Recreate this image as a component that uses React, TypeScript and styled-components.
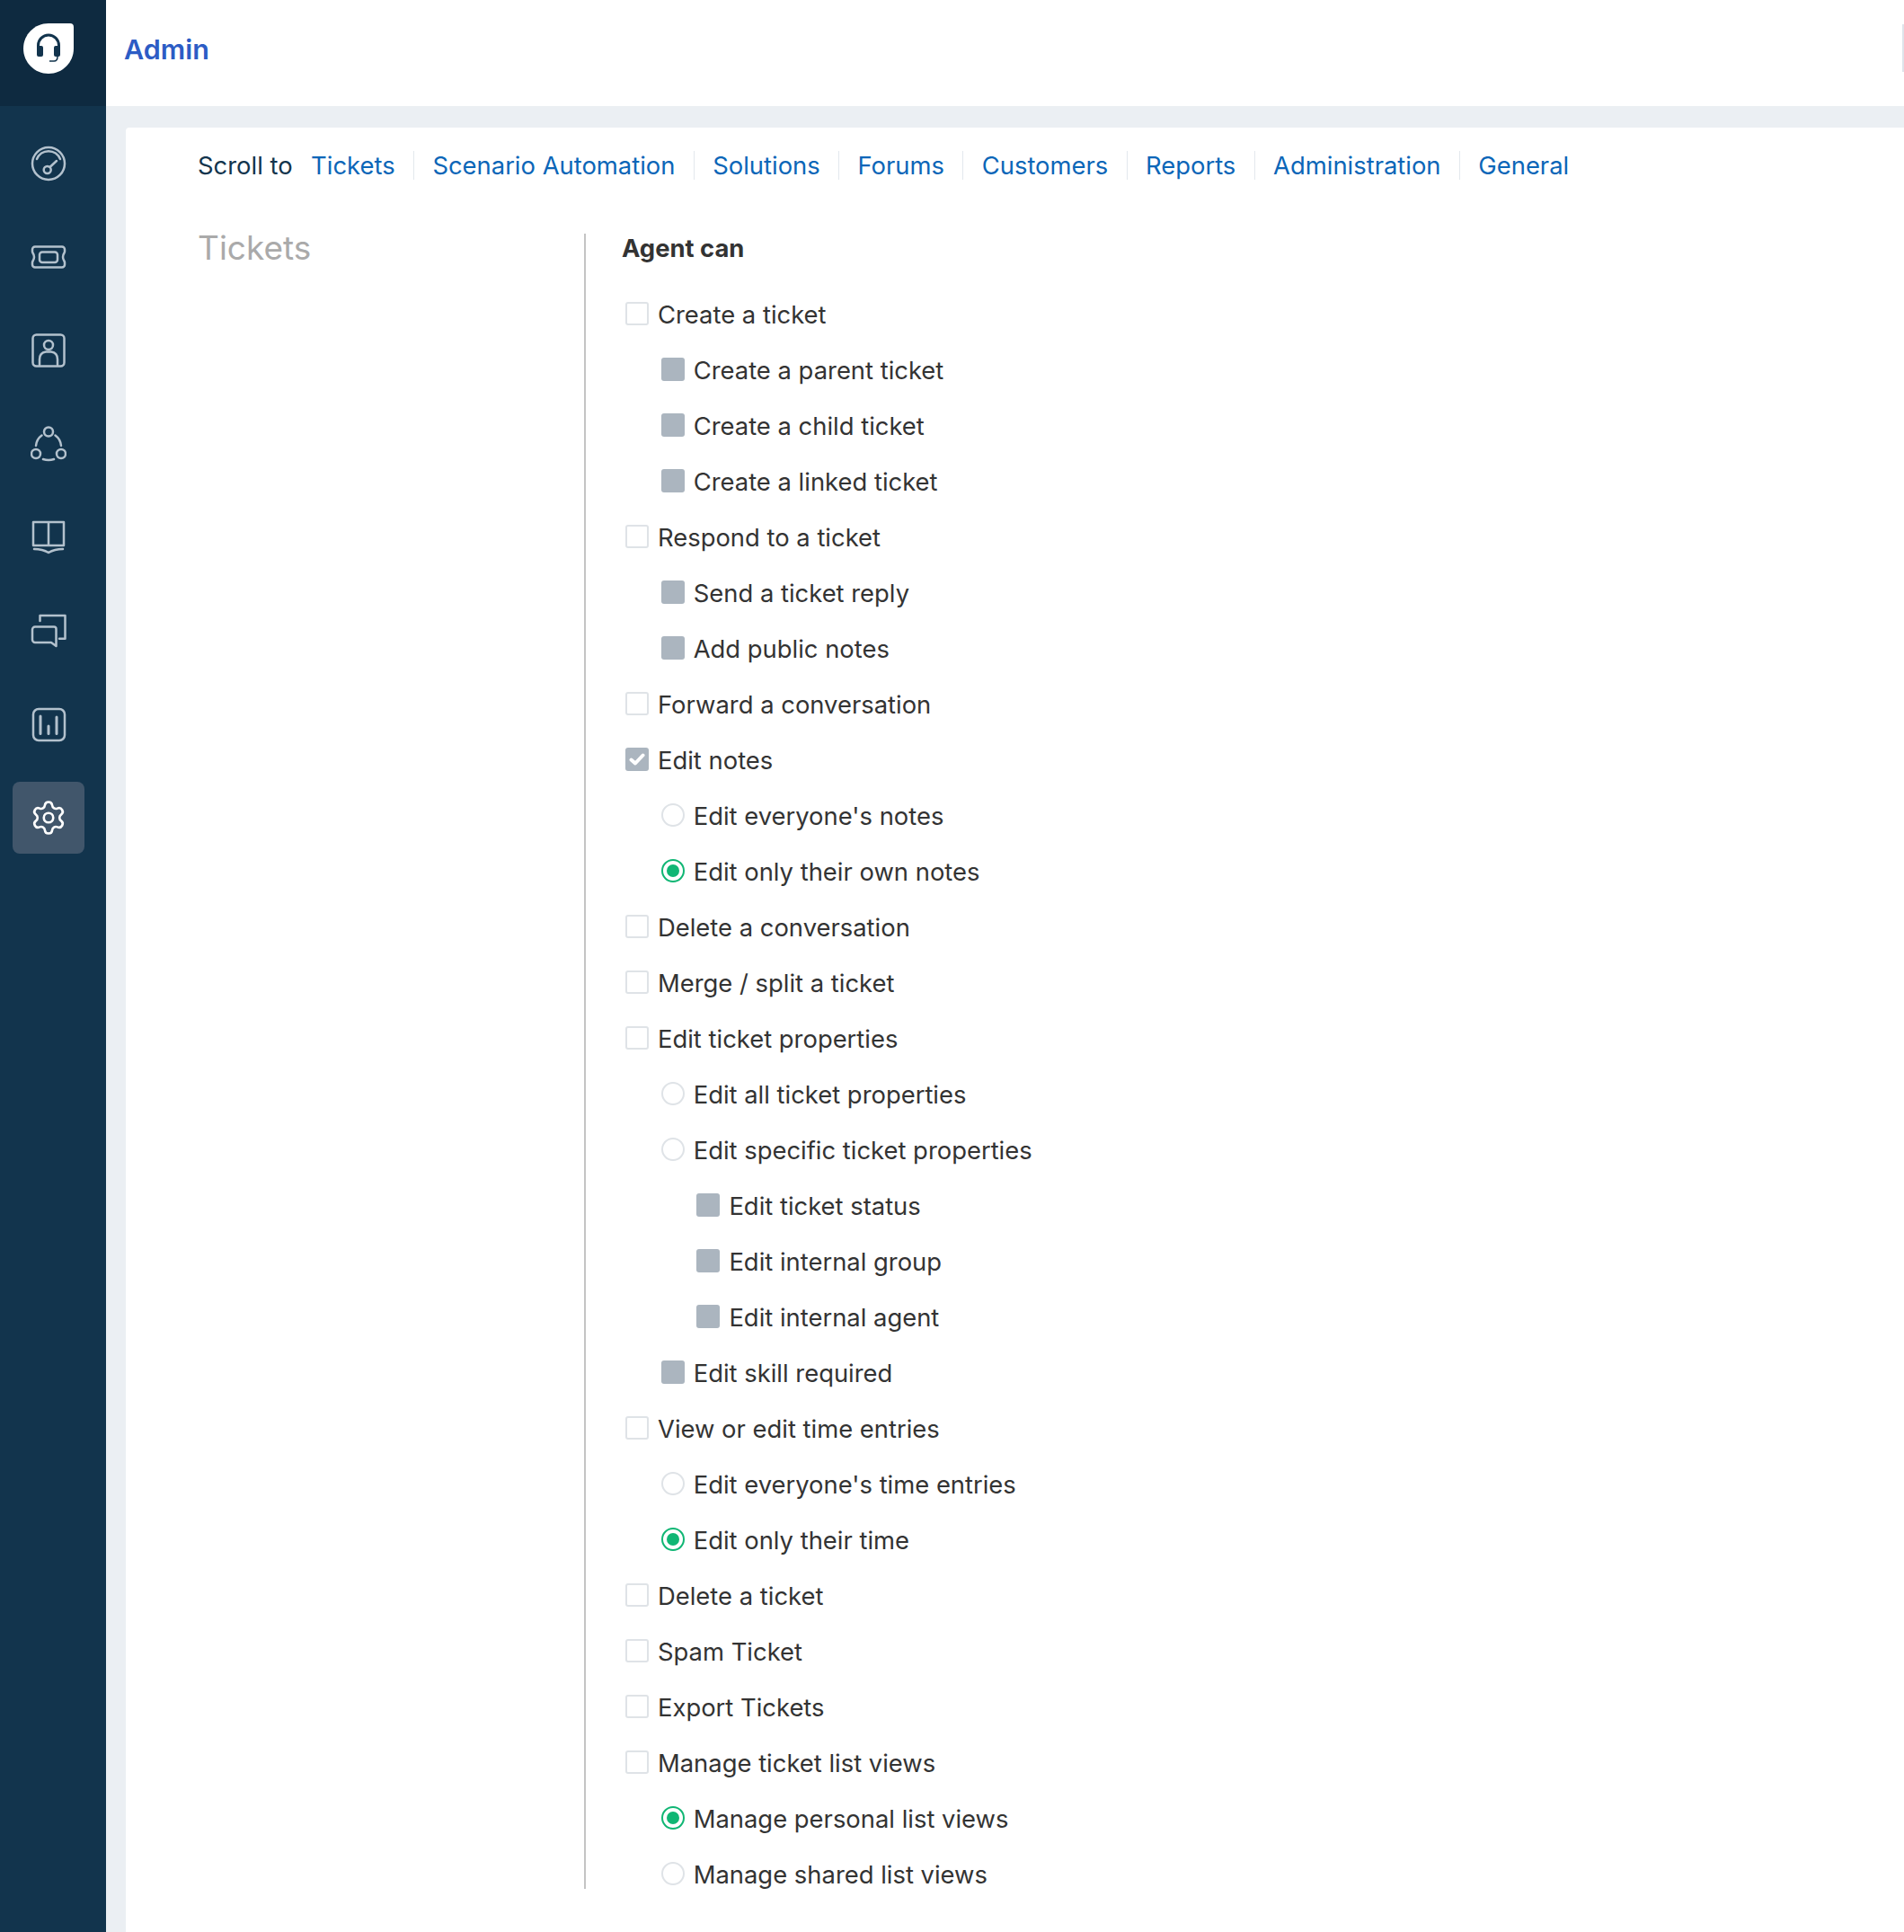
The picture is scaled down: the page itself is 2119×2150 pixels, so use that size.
import styled, { createGlobalStyle } from "styled-components";
import { Settings } from "lucide-react";
import type { ReactNode } from "react";

const GlobalStyle = createGlobalStyle`
  html, body {
    margin: 0;
    padding: 0;
    height: 2150px;
    overflow: hidden;
    background: #ebeff3;
    font-family: Inter, "Liberation Sans", sans-serif;
  }
`;

const Page = styled.div`
  display: flex;
  height: 2150px;
`;

const Sidebar = styled.aside`
  width: 118px;
  flex-shrink: 0;
  background: #12344d;
`;

const LogoBar = styled.div`
  height: 118px;
  background: #0e2a40;
  display: flex;
  padding: 26px 0 0 26px;
  box-sizing: border-box;
`;

const NavList = styled.nav`
  display: flex;
  flex-direction: column;
  gap: 24px;
  padding: 24px 0 0 14px;
`;

const NavItem = styled.div<{ $active?: boolean }>`
  width: 80px;
  height: 80px;
  border-radius: 8px;
  display: flex;
  align-items: center;
  justify-content: center;
  color: ${(p) => (p.$active ? "#ffffff" : "#b3c1cd")};
  background: ${(p) => (p.$active ? "#41566b" : "transparent")};
`;

const Main = styled.main`
  flex: 1;
  display: flex;
  flex-direction: column;
  min-width: 0;
`;

const Header = styled.header`
  position: relative;
  height: 118px;
  box-sizing: border-box;
  flex-shrink: 0;
  background: #fff;
  display: flex;
  align-items: center;
  padding: 0 0 10px 20px;
`;

const HeaderTitle = styled.h1`
  margin: 0;
  font-size: 30.5px;
  font-weight: 600;
  color: #2c5cc5;
`;

const EdgeMark = styled.div`
  position: absolute;
  right: 0;
  top: 27px;
  width: 2px;
  height: 53px;
  background: #dfe4ea;
`;

const Content = styled.div`
  flex: 1;
  padding: 24px 0 0 22px;
`;

const Card = styled.section`
  height: 100%;
  background: #fff;
  border-top-left-radius: 4px;
  padding-left: 80px;
`;

const ScrollBar = styled.div`
  display: flex;
  align-items: center;
  height: 84px;
  font-size: 27.4px;
`;

const ScrollLabel = styled.span`
  color: #12344d;
  margin-right: 20.5px;
`;

const ScrollLink = styled.a`
  color: #0b66b8;
  padding: 0 20.4px;
  height: 32px;
  line-height: 32px;
  border-left: 1px solid #e3e8ed;
  &:first-of-type {
    padding-left: 0;
    border-left: 0;
  }
`;

const Section = styled.div`
  display: flex;
  margin-top: 34px;
  align-items: flex-start;
`;

const SectionTitle = styled.h2`
  width: 430px;
  flex-shrink: 0;
  margin: 0;
  font-size: 37px;
  line-height: 32px;
  font-weight: 400;
  color: #aaaaaa;
`;

const Permissions = styled.div`
  border-left: 2px solid #c4c4c4;
  padding-left: 40px;
`;

const Heading = styled.div`
  font-size: 27.4px;
  line-height: 32px;
  font-weight: 700;
  color: #333333;
  margin-bottom: 27px;
`;

const List = styled.div`
  margin-bottom: -15px;
`;

const Row = styled.label<{ $level: number }>`
  display: flex;
  align-items: center;
  gap: 10px;
  height: 62px;
  padding-left: ${(p) => 4 + p.$level * 39.7}px;
  font-size: 27.4px;
  color: #333333;
`;

const Check = styled.span<{ $state: "off" | "disabled" | "on" }>`
  width: 26px;
  height: 26px;
  box-sizing: border-box;
  border-radius: 3px;
  flex-shrink: 0;
  margin-top: -2px;
  display: flex;
  align-items: center;
  justify-content: center;
  color: #fff;
  background: ${(p) => (p.$state === "off" ? "#fff" : "#abb5bf")};
  border: ${(p) => (p.$state === "off" ? "2px solid #dfe3e7" : "0")};
`;

const Radio = styled.span<{ $on?: boolean }>`
  width: 26px;
  height: 26px;
  box-sizing: border-box;
  border-radius: 50%;
  flex-shrink: 0;
  margin-top: -2px;
  display: flex;
  align-items: center;
  justify-content: center;
  background: #fff;
  border: 2px solid ${(p) => (p.$on ? "#10b674" : "#dfe3e7")};
`;

const RadioDot = styled.span`
  width: 14px;
  height: 14px;
  border-radius: 50%;
  background: #10b674;
`;

const Icon = ({ children }: { children: ReactNode }) => (
  <svg width="40" height="40" viewBox="0 0 40 40" fill="none" stroke="currentColor" strokeWidth="2.500" strokeLinecap="round" strokeLinejoin="round">
    {children}
  </svg>
);

const navIcons: ReactNode[] = [
  <Icon key="dashboard">
    <circle cx="20" cy="20" r="18" />
    <path d="M7 15A14 14 0 0 1 33 15" />
    <circle cx="18.700" cy="27" r="4" />
    <path d="M21.500 24L29 17" />
  </Icon>,
  <Icon key="tickets">
    <path d="M5 8.500h30a3 3 0 0 1 3 3v2.500c0 1.500-2 2.500-2 6s2 4.500 2 6v2.500a3 3 0 0 1-3 3H5a3 3 0 0 1-3-3V26c0-1.500 2-2.500 2-6s-2-4.500-2-6v-2.500a3 3 0 0 1 3-3z" />
    <rect x="10" y="14.500" width="20" height="11.500" rx="3" />
  </Icon>,
  <Icon key="contacts">
    <rect x="2.500" y="2.500" width="35" height="35" rx="4" />
    <circle cx="20" cy="14" r="5" />
    <path d="M10 36v-6c0-5 3-8 7-8.500h6c4 .5 7 3.500 7 8.500v6" />
  </Icon>,
  <Icon key="groups">
    <circle cx="20" cy="6.500" r="5" />
    <circle cx="6" cy="31" r="5" />
    <circle cx="34" cy="31" r="5" />
    <path d="M12.500 10.500C9 13 6.500 17 6 22M27.500 10.500C31 13 33.500 17 34 22M14 37c4 1.300 8 1.300 12 0" />
  </Icon>,
  <Icon key="solutions">
    <path d="M20 3H3v26h17M20 3h17v26H20M20 3v26" />
    <path d="M4 33c6 0 11 1 16 4 5-3 10-4 16-4" />
  </Icon>,
  <Icon key="forums">
    <path d="M10.500 9V3h28v25.700H32" />
    <path d="M5 15.500h21c1.500 0 2.500 1 2.500 2.500v19L23 33H5c-1.500 0-3-1.500-3-3V18.500c0-1.500 1.500-3 3-3z" />
  </Icon>,
  <Icon key="reports">
    <rect x="3" y="3" width="35" height="35" rx="6" />
    <path d="M11 11v19.500M20 22v8.500M29 12v18.500" strokeWidth="3" />
  </Icon>,
  <Settings key="admin" size={42} strokeWidth={1.5} />,
];

const scrollLinks = ["Tickets", "Scenario Automation", "Solutions", "Forums", "Customers", "Reports", "Administration", "General"];

type Kind = "off" | "disabled" | "on" | "radio" | "radioOn";

const rows: [string, number, Kind][] = [
  ["Create a ticket", 0, "off"],
  ["Create a parent ticket", 1, "disabled"],
  ["Create a child ticket", 1, "disabled"],
  ["Create a linked ticket", 1, "disabled"],
  ["Respond to a ticket", 0, "off"],
  ["Send a ticket reply", 1, "disabled"],
  ["Add public notes", 1, "disabled"],
  ["Forward a conversation", 0, "off"],
  ["Edit notes", 0, "on"],
  ["Edit everyone's notes", 1, "radio"],
  ["Edit only their own notes", 1, "radioOn"],
  ["Delete a conversation", 0, "off"],
  ["Merge / split a ticket", 0, "off"],
  ["Edit ticket properties", 0, "off"],
  ["Edit all ticket properties", 1, "radio"],
  ["Edit specific ticket properties", 1, "radio"],
  ["Edit ticket status", 2, "disabled"],
  ["Edit internal group", 2, "disabled"],
  ["Edit internal agent", 2, "disabled"],
  ["Edit skill required", 1, "disabled"],
  ["View or edit time entries", 0, "off"],
  ["Edit everyone's time entries", 1, "radio"],
  ["Edit only their time", 1, "radioOn"],
  ["Delete a ticket", 0, "off"],
  ["Spam Ticket", 0, "off"],
  ["Export Tickets", 0, "off"],
  ["Manage ticket list views", 0, "off"],
  ["Manage personal list views", 1, "radioOn"],
  ["Manage shared list views", 1, "radio"],
];

const Control = ({ kind }: { kind: Kind }) => {
  if (kind === "radio") return <Radio />;
  if (kind === "radioOn") {
    return (
      <Radio $on>
        <RadioDot />
      </Radio>
    );
  }
  return (
    <Check $state={kind}>
      {kind === "on" && (
        <svg width="18" height="14" viewBox="0 0 18 14" fill="none" stroke="currentColor" strokeWidth="4" strokeLinecap="round" strokeLinejoin="round">
          <path d="M2.500 7.500L7 11.500 15.500 2.500" />
        </svg>
      )}
    </Check>
  );
};

export default function App() {
  return (
    <Page>
      <GlobalStyle />
      <Sidebar>
        <LogoBar>
          <svg width="56" height="56" viewBox="0 0 56 56">
            <path d="M28 0h24c2.500 0 4 1.500 4 4v24c0 15.500-12.500 28-28 28S0 43.500 0 28 12.500 0 28 0z" fill="#fff" />
            <path d="M16.500 28v-3.500a11.500 11.500 0 0 1 23 0V28" fill="none" stroke="#12344d" strokeWidth="3" />
            <rect x="15" y="25" width="7" height="12" rx="2" fill="#12344d" />
            <rect x="34" y="25" width="7" height="12" rx="2" fill="#12344d" />
            <path d="M38 37c0 4-2 5-4 5h-5" fill="none" stroke="#12344d" strokeWidth="1.500" />
          </svg>
        </LogoBar>
        <NavList>
          {navIcons.map((icon, i) => (
            <NavItem key={i} $active={i === navIcons.length - 1}>
              {icon}
            </NavItem>
          ))}
        </NavList>
      </Sidebar>
      <Main>
        <Header>
          <HeaderTitle>Admin</HeaderTitle>
          <EdgeMark />
        </Header>
        <Content>
          <Card>
            <ScrollBar>
              <ScrollLabel>Scroll to</ScrollLabel>
              {scrollLinks.map((link) => (
                <ScrollLink key={link}>{link}</ScrollLink>
              ))}
            </ScrollBar>
            <Section>
              <SectionTitle>Tickets</SectionTitle>
              <Permissions>
                <Heading>Agent can</Heading>
                <List>
                  {rows.map(([label, level, kind]) => (
                    <Row key={label} $level={level}>
                      <Control kind={kind} />
                      {label}
                    </Row>
                  ))}
                </List>
              </Permissions>
            </Section>
          </Card>
        </Content>
      </Main>
    </Page>
  );
}
